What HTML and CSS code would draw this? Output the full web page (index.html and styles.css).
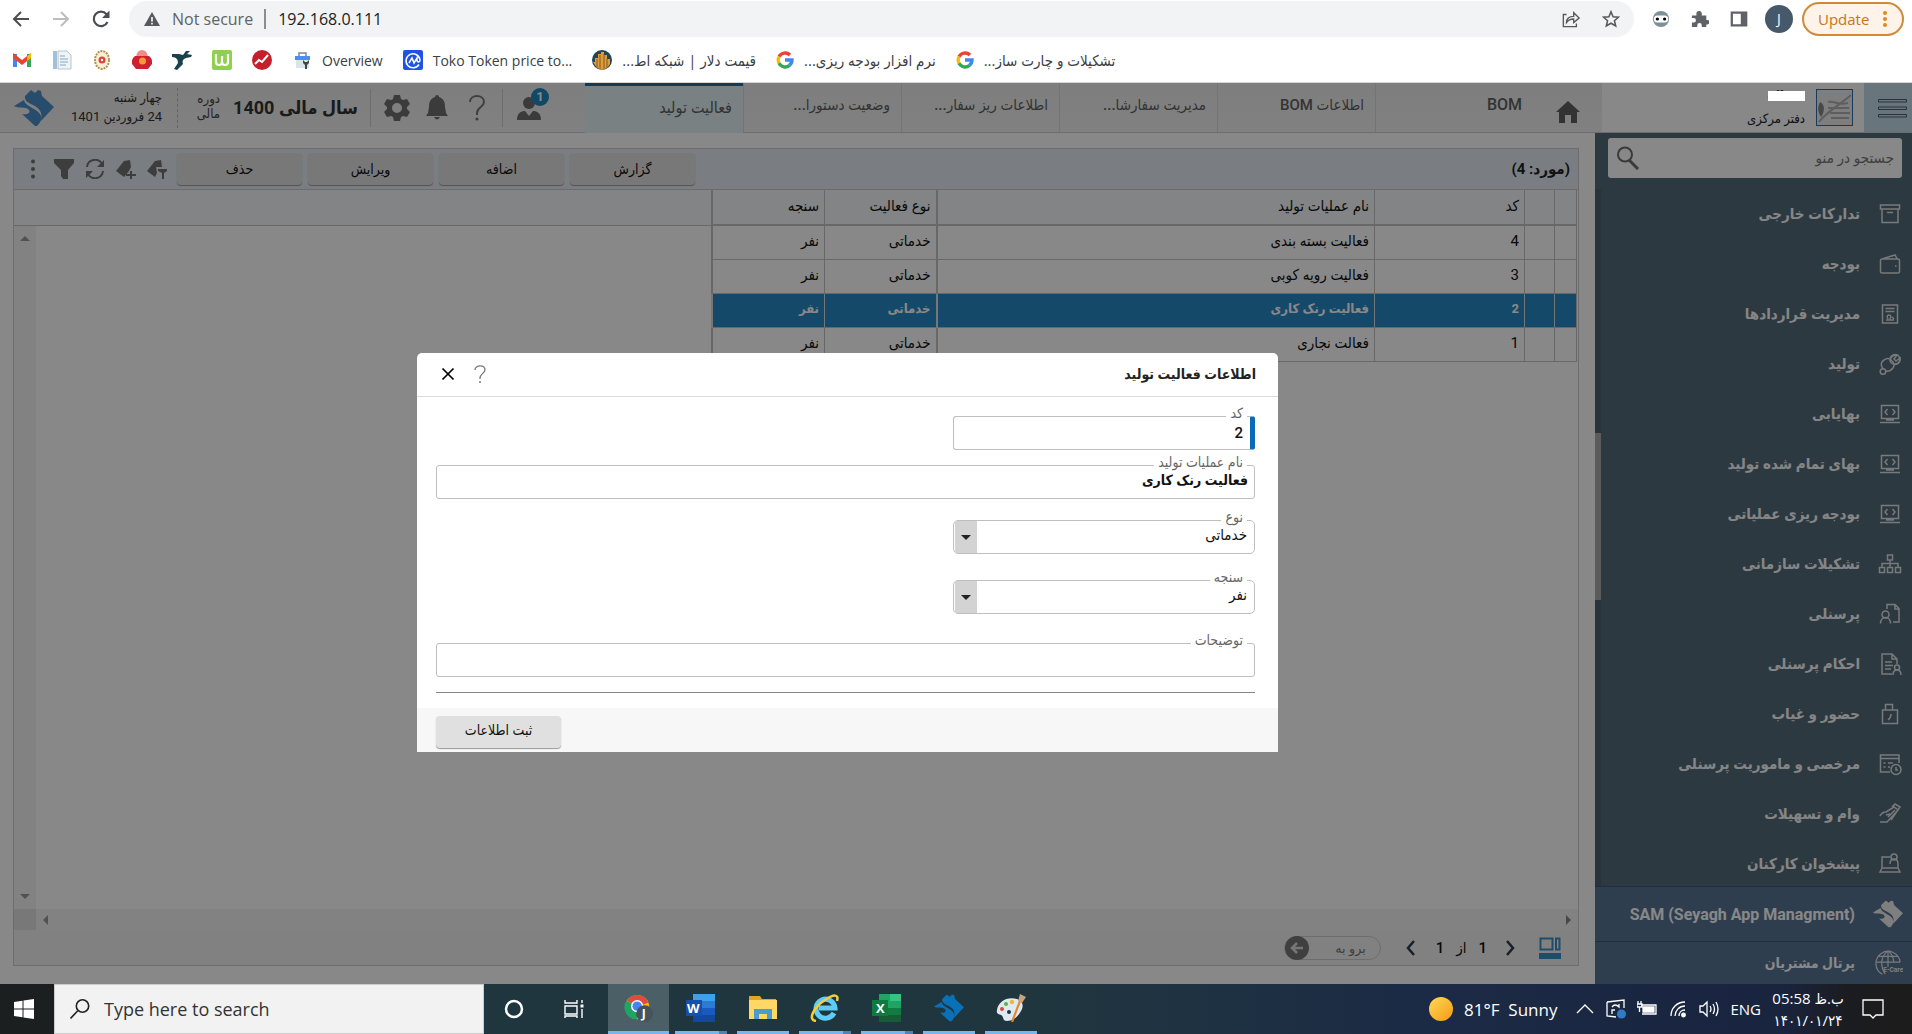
FILE: index.html
```html
<!DOCTYPE html>
<html lang="fa">
<head>
<meta charset="utf-8">
<title>فعالیت تولید</title>
<link rel="stylesheet" href="styles.css">
</head>
<body>
<svg class="defs" aria-hidden="true">
  <symbol id="logo" viewBox="0 0 40 36"><path d="M0 16 10 10c1 7 14 8 17 16 1 4-1 7-4 10h-2L8 24c5 1 9-1 7-4C12 16 4 19 0 16zM11 6l6-6 4 3 3-3 3 1 1 5 12 11-13 14c2-9-2-13-8-16-4-2-9-4-8-9z"/></symbol>
  <symbol id="g" viewBox="0 0 18 18"><g fill="none" stroke-width="3.4"><path stroke="#ea4335" d="M3 5.600A7 7 0 0 1 14 4"/><path stroke="#fbbc05" d="M3.200 12.500a7 7 0 0 1 0-7"/><path stroke="#34a853" d="M13.500 14.400A7 7 0 0 1 3 12.300"/><path stroke="#4285f4" d="M9 9h7a7 7 0 0 1-2.600 5.400"/></g></symbol>
  <symbol id="monitor" viewBox="0 0 24 24"><path d="M3.500 3.500h17v13h-17zM2 20.500h20M8 18h8M9.500 7 7 10l2.500 3M14.500 7l2.500 3-2.500 3"/></symbol>
</svg>

<header class="browser">
  <div class="nav-row">
    <button class="nav-btn" aria-label="Back"><svg viewBox="0 0 20 20"><path d="M18 10H3M10 3l-7 7 7 7" fill="none" stroke="#4b4e52" stroke-width="2"/></svg></button>
    <button class="nav-btn" aria-label="Forward"><svg viewBox="0 0 20 20"><path d="M2 10h15M10 3l7 7-7 7" fill="none" stroke="#bcbdc0" stroke-width="2"/></svg></button>
    <button class="nav-btn" aria-label="Reload"><svg viewBox="0 0 20 20"><path d="M16.500 13A7.200 7.200 0 1 1 15.500 5.200L17 7" fill="none" stroke="#4b4e52" stroke-width="2.200"/><path d="M18.500 1.500V9H11z" fill="#4b4e52"/></svg></button>
    <div class="omnibox">
      <svg class="i16" viewBox="0 0 16 16"><path d="M8 1 16 15H0z" fill="#55585c"/><path d="M8 6v4.500M8 11.800v1.700" stroke="#fff" stroke-width="1.600"/></svg>
      <span class="insecure">Not secure</span>
      <input class="address" aria-label="Address" value="192.168.0.111">
      <svg class="i20" viewBox="0 0 20 20"><path d="M5 5H1.500v13.500H16V15M5 14c0-5 3-7 8-7V3l6 6-6 5v-4c-4 0-6 1-8 4z" fill="none" stroke="#55585c" stroke-width="1.500"/></svg>
      <svg class="i20" viewBox="0 0 20 20"><path d="m10 2 2.300 5.500 6 .500-4.500 4 1.400 5.800L10 14.700l-5.200 3.100L6.200 12 1.700 8l6-.500z" fill="none" stroke="#55585c" stroke-width="1.700"/></svg>
    </div>
    <div class="extensions">
      <svg class="i20" viewBox="0 0 20 20"><circle cx="10" cy="10" r="9" fill="#7b9299"/><rect x="2" y="6" width="16" height="8" rx="4" fill="#fff"/><circle cx="6" cy="10" r="1.800"/><circle cx="14" cy="10" r="1.800"/></svg>
      <svg class="i20" viewBox="0 0 20 20" fill="#5f6368"><path d="M1 6h5V4a3 3 0 0 1 6 0v2h5v5h1a2 2 0 0 1 0 5h-1v3h-5v-2a2 2 0 0 0-5 0v2H1v-5h2a2.500 2.500 0 0 0 0-5H1z"/></svg>
      <svg class="i20" viewBox="0 0 20 20"><path d="M2 3h16v14H2z" fill="none" stroke="#5f6368" stroke-width="2.500"/><path d="M12 3h6v14h-6z" fill="#5f6368"/></svg>
      <span class="profile">J</span>
    </div>
    <button class="update">Update <span class="dots-v"></span></button>
  </div>
  <nav class="bookmarks">
    <a href="#" aria-label="Gmail"><svg viewBox="0 0 20 20"><path d="M1 4h4v13H1z" fill="#4285f4"/><path d="M15 4h4v13h-4z" fill="#34a853"/><path d="m1 3 9 7 9-7v5l-9 7-9-7z" fill="#ea4335"/><path d="M15 6.500 19 3v5l-4 3z" fill="#fbbc05"/></svg></a>
    <a href="#" aria-label="Documents"><svg viewBox="0 0 20 20"><path d="M1 1h4v18H1z" fill="#9fc2da"/><path d="M6 1h9l4 4v14H6z" fill="#eef3f6" stroke="#b8c4cc"/><path d="M8 6h5M8 9h8M8 12h8M8 15h6" stroke="#7fa9c6" stroke-width="1.200"/></svg></a>
    <a href="#" aria-label="Bank"><svg viewBox="0 0 20 20"><ellipse cx="10" cy="10" rx="7" ry="9" fill="#f7eed8" stroke="#b39250" stroke-width="2" stroke-dasharray="2 1"/><circle cx="10" cy="10" r="3.500" fill="#d9433c"/><circle cx="10" cy="10" r="1.200" fill="#fff"/></svg></a>
    <a href="#" aria-label="Market"><svg viewBox="0 0 20 20"><path d="M4 7Q5 0 10 0t6 7z" fill="#ee8d85"/><path d="M3 6h14q4 3 3 8l-4 5H4l-4-5q-1-5 3-8z" fill="#cf2031"/><circle cx="10.500" cy="11" r="3.500" fill="#f59a36"/></svg></a>
    <a href="#" aria-label="Trade"><svg viewBox="0 0 20 20"><path d="M0 4h7l4 1 3-4h4l-3 3 5 1-1 2-5 1c-3 1-4 3-3 6l-6 6-3-1 4-6c0-4-2-6-7-6z" fill="#17424e"/></svg></a>
    <a href="#" aria-label="Wiki"><svg viewBox="0 0 20 20"><rect width="20" height="20" rx="2" fill="#8fd14c"/><path d="M4 4v8q0 3 3 3t3-3V6v6q0 3 3 3t3-3V4" fill="none" stroke="#fff" stroke-width="2.200"/></svg></a>
    <a href="#" aria-label="Bourse"><svg viewBox="0 0 20 20"><circle cx="10" cy="10" r="10" fill="#c4202b"/><path d="m3 14 4-4 3 2 6-7" fill="none" stroke="#fff" stroke-width="2"/></svg></a>
    <a href="#"><svg viewBox="0 0 20 20"><path d="M7 6V3h7v3" fill="none" stroke="#7a8590" stroke-width="1.500"/><path d="M3 6h15v4H3z" fill="#4d8df6"/><path d="M4 10h13v8H4z" fill="#dde3ea"/><path d="M11 10v3l2 2v4h2v-4l2-2v-3l-2 2h-2z" fill="#444"/></svg>Overview</a>
    <a href="#"><svg viewBox="0 0 20 20"><rect width="20" height="20" rx="2" fill="#2052e8"/><path d="M16 14.500a7 7 0 1 1 1-4.500c0 2.500-3 3-3 0V8l-3 5-2-5-3 5" fill="none" stroke="#fff" stroke-width="1.500"/></svg>Toko Token price to...</a>
    <a href="#" dir="rtl" class="fa">قیمت دلار | شبکه اط...<svg viewBox="0 0 20 20"><circle cx="10" cy="10" r="10" fill="#234554"/><path d="M1 12h2V8h3V4h3V2h3v3h3v4h3v5l-3 4-5 2-5-2z" fill="#e39b35"/><path d="M5 9v9M8 5v14M12 4v15M15 9v9" stroke="#7a5a2c"/></svg></a>
    <a href="#" dir="rtl" class="fa">نرم افزار بودجه ریزی...<svg class="goog" viewBox="0 0 18 18"><use href="#g"/></svg></a>
    <a href="#" dir="rtl" class="fa">تشکیلات و چارت ساز...<svg class="goog" viewBox="0 0 18 18"><use href="#g"/></svg></a>
  </nav>
</header>

<main class="app" dir="rtl">
  <header class="topbar">
    <button class="menu-btn" aria-label="منو"><svg viewBox="0 0 30 20"><path d="M.500 1.500h28v2.500H.500zM.500 9h28v2.500H.500zM.500 16.500h28v2.500H.500z" fill="none" stroke="#4f5f6b"/></svg></button>
    <div class="user">
      <svg class="avatar" viewBox="0 0 37 37"><rect x=".5" y=".5" width="36" height="36" fill="#ececec" stroke="#336e9e"/><path d="M4 13c6 3 4 11 1 15-3-5-4-9-1-15z" fill="#888"/><path d="M3 33C9 24 25 15 35 6M12 13c6-2 9 4 20 1M12 19h21M14 24h20M15 29h18" fill="none" stroke="#b0b0b0" stroke-width="2"/></svg>
      <div class="who"><span class="uname">oikoo<i class="cover"></i></span><span>دفتر مرکزی</span></div>
    </div>
    <a class="home" href="#" aria-label="خانه"><svg viewBox="0 0 24 22"><path d="M12 0 0 11h3v11h6v-8h6v8h6V11h3z"/></svg></a>
    <nav class="tabs">
      <a href="#">BOM</a><a href="#">اطلاعات BOM</a><a href="#">مدیریت سفارشا...</a><a href="#">اطلاعات ریز سفار...</a><a href="#">وضعیت دستورا...</a><a href="#" class="active">فعالیت تولید</a>
    </nav>
    <div class="tools" dir="ltr">
      <svg class="brand" viewBox="0 0 40 36"><use href="#logo"/></svg>
      <div class="date" dir="rtl">چهار شنبه<br>24 فروردین 1401</div>
      <div class="period" dir="rtl">دوره<br>مالی</div>
      <div class="year" dir="rtl">سال مالی 1400</div>
      <button class="tool" aria-label="تنظیمات"><svg viewBox="0 0 26 26"><path fill-rule="evenodd" d="M10 0h6l1 4 2 1 4-1 3 5-3 3v2l3 3-3 5-4-1-2 1-1 4h-6l-1-4-2-1-4 1-3-5 3-3v-2L0 9l3-5 4 1 2-1zm3 8a5 5 0 1 0 0 10 5 5 0 0 0 0-10z"/></svg></button>
      <button class="tool" aria-label="اعلان"><svg viewBox="0 0 26 26"><path d="M11 2a2 2 0 0 1 4 0c5 2 6 5 6 10l1 6 2 3H2l2-3 1-6c0-5 1-8 6-10zM10 22h6q-3 5-6 0z"/></svg></button>
      <button class="tool" aria-label="راهنما"><svg viewBox="0 0 26 26"><path d="M6 7c0-8 14-8 14 0 0 5-7 5-7 11v2" fill="none" stroke="#777" stroke-width="2"/><circle cx="13" cy="24" r="1.500"/></svg></button>
      <button class="tool people" aria-label="کاربران"><svg viewBox="0 0 26 26"><circle cx="13" cy="8" r="6"/><path d="M1 25c0-7 4-9 8-9l4 5 4-5c4 0 8 2 8 9z"/></svg><span class="badge">1</span></button>
    </div>
  </header>

  <div class="workspace">
    <aside class="side">
      <div class="finder"><input type="search" placeholder="جستجو در منو" aria-label="جستجو در منو"><svg viewBox="0 0 24 24"><circle cx="9" cy="8.500" r="7" fill="none" stroke="#6d6d6d" stroke-width="2"/><path d="m13 14 9 9" stroke="#6d6d6d" stroke-width="3"/></svg></div>
      <div class="menu-wrap">
      <nav class="menu">
        <a href="#"><svg viewBox="0 0 24 24"><path d="M2.500 3h19v4h-19zM4 7v13.500h16V7M9 10.500h6"/></svg>تدارکات خارجی</a>
        <a href="#"><svg viewBox="0 0 24 24"><path d="M4 7h16q1.500 0 1.500 1.500v11q0 1.500-1.500 1.500H4q-1.500 0-1.500-1.500v-11Q2.500 7 4 7l13-4 2 3.500M17 14h1.500"/></svg>بودجه</a>
        <a href="#"><svg viewBox="0 0 24 24"><path d="M4.500 3h15v18h-15zM7.500 6.500h9M7.500 9.500h9M8 18h8M10 17q-2-4 1-4t1 4M14 15l2 2"/></svg>مدیریت قراردادها</a>
        <a href="#"><svg viewBox="0 0 24 24"><path d="M12 9q1-6 7-6l-3 4 2 2 4-3q0 6-5 6M5 17q-4-6 1-9 4-3 7 0 5 4 2 8-3 4-8 3"/><circle cx="17" cy="7.500" r="5"/><circle cx="5" cy="19.500" r="2.800"/></svg>تولید</a>
        <a href="#"><svg><use href="#monitor"/></svg>بهایابی</a>
        <a href="#"><svg><use href="#monitor"/></svg>بهای تمام شده تولید</a>
        <a href="#"><svg><use href="#monitor"/></svg>بودجه ریزی عملیاتی</a>
        <a href="#"><svg viewBox="0 0 24 24"><path d="M9.500 3h5v5h-5zM1.500 15.500h5v5h-5zM9.500 15.500h5v5h-5zM17.500 15.500h5v5h-5zM12 8v7M4 15v-3.500h16V15"/></svg>تشکیلات سازمانی</a>
        <a href="#"><svg viewBox="0 0 24 24"><path d="M9 7V2.500h8l4 4V20h-6M17 3v4h4M2.500 21.500c0-8 10-8 10 0"/><circle cx="7.500" cy="12.500" r="3.500"/></svg>پرسنلی</a>
        <a href="#"><svg viewBox="0 0 24 24"><path d="M14 22H4V2h10l5 5v5M14 2v5h5M7 10h7M7 13.500h8M7 17h6M15 23q0-5 4-5t4 5"/><circle cx="19" cy="15.500" r="2.500"/></svg>احکام پرسنلی</a>
        <a href="#"><svg viewBox="0 0 24 24"><path d="M4.500 8h15v13.500h-15zM7.500 8V2.500h7V8M13 12q0 4-3 6"/></svg>حضور و غیاب</a>
        <a href="#"><svg viewBox="0 0 24 24"><path d="M12 20H2.500V3H21v8M2.500 6.500H21M5.500 11h2M10 11h5M5.500 15h2M10 15h2M18 15v3h2"/><circle cx="18" cy="17.500" r="5"/></svg>مرخصی و ماموریت پرسنلی</a>
        <a href="#"><svg viewBox="0 0 24 24"><path d="M2 20h7l11-12-4-3-8 5q-4 0-6 4M10 15l7-7M14 5l3-3 5 3-9 13M8 13l4-1"/></svg>وام و تسهیلات</a>
        <a href="#"><svg viewBox="0 0 24 24"><path d="M4 16V5h8M20 12v4M2 20l2-4h16l2 4zM12 12q0-5 4-5t4 5"/><circle cx="16" cy="5" r="3"/></svg>پیشخوان کارکنان</a>
      </nav>
      <i class="thumb"></i>
      </div>
      <a class="product sam" href="#"><svg class="solid" viewBox="0 0 40 36"><use href="#logo"/></svg><bdi>SAM (Seyagh App Managment)</bdi></a>
      <a class="product" href="#"><svg viewBox="0 0 30 30"><path d="M9 27A13 13 0 1 1 28 14M15 2v17M2 14h26M4 8h22M15 2c-8 6-9 16-3 25M15 2c4 3 6 7 6 12" fill="none"/><text x="10" y="25">E-Care</text></svg>پرتال مشتریان</a>
    </aside>

    <section class="panel">
      <div class="actions">
        <strong>(مورد: 4)</strong>
        <button class="btn">گزارش</button><button class="btn">اضافه</button><button class="btn">ویرایش</button><button class="btn">حذف</button>
        <div class="mini" dir="ltr">
          <svg viewBox="0 0 20 20"><circle cx="10" cy="2.500" r="2"/><circle cx="10" cy="10" r="2"/><circle cx="10" cy="17.500" r="2"/></svg>
          <svg viewBox="0 0 20 20"><path d="M0 0h20v4l-6 7v9H9l-2-3v-6L0 4z"/></svg>
          <svg viewBox="0 0 20 20"><path d="M2 8a8 8 0 0 1 15-3M18 12a8 8 0 0 1-15 3" fill="none" stroke="#737373" stroke-width="2"/><path d="M19 1v7h-7zM1 19v-7h7z"/></svg>
          <svg viewBox="0 0 20 20"><path d="M0 12 8 2l6-1 1 7-2 4-5 6zM14 12h2v3h4v2h-4v3h-2v-3h-4v-2h4z"/></svg>
          <svg viewBox="0 0 20 20"><path d="M0 12 8 2l6-1 1 7H9l1 6-2 4zM11 10h9v2l-3 2v6h-2v-6l-4-2z"/></svg>
        </div>
      </div>
      <div class="grid-area">
        <table>
          <colgroup><col class="c1"><col class="c2"><col class="c3"><col class="c4"><col class="c5"><col class="c6"></colgroup>
          <thead><tr><th></th><th></th><th>کد</th><th>نام عملیات تولید</th><th>نوع فعالیت</th><th>سنجه</th></tr></thead>
          <tbody>
            <tr><td></td><td></td><td>4</td><td>فعالیت بسته بندی</td><td>خدماتی</td><td>نفر</td></tr>
            <tr><td></td><td></td><td>3</td><td>فعالیت رویه کوبی</td><td>خدماتی</td><td>نفر</td></tr>
            <tr class="sel"><td></td><td></td><td>2</td><td>فعالیت رنک کاری</td><td>خدماتی</td><td>نفر</td></tr>
            <tr><td></td><td></td><td>1</td><td>فعالت نجاری</td><td>خدماتی</td><td>نفر</td></tr>
          </tbody>
        </table>
        <div class="filler"><div class="head-fill"></div><div class="vscroll"><i class="up"></i><i class="down"></i></div></div>
      </div>
      <div class="hscroll"><i class="right"></i><i class="left"></i><span class="corner"></span></div>
      <footer class="pager">
        <svg viewBox="0 0 22 22"><path d="M1.500 1.500h12v11h-12zM17 1.500h3.500v11H17z" fill="none" stroke="#3a91c6" stroke-width="2"/><path d="M0 16h22v6H0z" fill="#3a91c6"/></svg>
        <button class="prev" aria-label="قبلی"><svg viewBox="0 0 10 16"><path d="m2 1 6 7-6 7" fill="none" stroke="#2c3b52" stroke-width="2.500"/></svg></button>
        <span>1</span><span>از</span><span>1</span>
        <button class="next" aria-label="بعدی"><svg viewBox="0 0 10 16"><path d="M8 1 2 8l6 7" fill="none" stroke="#2c3b52" stroke-width="2.500"/></svg></button>
        <div class="goto"><input placeholder="برو به" aria-label="برو به"><button aria-label="برو"><svg viewBox="0 0 24 24"><circle cx="12" cy="12" r="12" fill="#777"/><path d="M18 12H7M12 7l-5 5 5 5" fill="none" stroke="#ddd" stroke-width="2.500"/></svg></button></div>
      </footer>
    </section>
  </div>

  <div class="backdrop">
    <form class="dialog" role="dialog" aria-labelledby="dlg-title">
      <div class="dlg-head"><h2 id="dlg-title">اطلاعات فعالیت تولید</h2>
        <button type="button" aria-label="راهنما"><svg viewBox="0 0 14 18"><path d="M2 5c0-5.500 10-5.500 10 0 0 3-5 4-5 8v1" fill="none" stroke="#777" stroke-width="1.300"/><circle cx="7" cy="17" r="1"/></svg></button>
        <button type="button" aria-label="بستن"><svg viewBox="0 0 14 18"><path d="m1.500 3.500 11 11M12.500 3.500l-11 11" stroke="#000" stroke-width="1.700"/></svg></button>
      </div>
      <div class="dlg-body">
        <div class="field short key"><label for="f1">کد</label><input id="f1" value="2"></div>
        <div class="field name"><label for="f2">نام عملیات تولید</label><input id="f2" value="فعالیت رنک کاری"></div>
        <div class="field short pick"><label for="f3">نوع</label><select id="f3"><option>خدماتی</option></select><i class="arrow"></i></div>
        <div class="field short pick"><label for="f4">سنجه</label><select id="f4"><option>نفر</option></select><i class="arrow"></i></div>
        <div class="field note"><label for="f5">توضیحات</label><input id="f5"></div>
      </div>
      <div class="dlg-foot"><button class="btn" type="button">ثبت اطلاعات</button></div>
    </form>
  </div>
</main>

<footer class="taskbar">
  <button class="start" aria-label="Start"><svg viewBox="0 0 20 20" fill="#fff"><path d="m0 3 8.500-1.200v7.700H0zM9.500 1.600 20 0v9.500H9.500zM0 10.500h8.500v7.700L0 17zM9.500 10.500H20V20L9.500 18.400z"/></svg></button>
  <label class="tb-search"><svg viewBox="0 0 20 20"><circle cx="12.500" cy="7" r="6.200" fill="none" stroke="#222" stroke-width="1.600"/><path d="M8 11.500.500 19.500" stroke="#222" stroke-width="1.600"/></svg><input placeholder="Type here to search"></label>
  <button class="tile plain" aria-label="Cortana"><svg viewBox="0 0 20 20"><circle cx="10" cy="10" r="8" fill="none" stroke="#fff" stroke-width="2.500"/></svg></button>
  <button class="tile plain" aria-label="Task view"><svg viewBox="0 0 20 20"><path d="M1 1v3h12V1M1 7h12v8H1zM1 19v-2h12v2M18 1v3M18 10v9" fill="none" stroke="#fff" stroke-width="1.400"/><path d="M16.500 5.500h3v3h-3z" fill="#fff"/></svg></button>
  <button class="tile on" aria-label="Chrome"><svg viewBox="0 0 32 30"><circle cx="14" cy="14" r="13" fill="#fbbc05"/><path d="M14 14 3 7a13 13 0 0 1 23 2z" fill="#e04a3f"/><path d="M14 14v13A13 13 0 0 1 2.500 7z" fill="#1fa463"/><circle cx="14" cy="13" r="6.500" fill="#fff"/><circle cx="14" cy="13" r="5" fill="#4285f4"/><circle cx="22" cy="21" r="9" fill="#46535b"/><text x="19" y="26">J</text></svg></button>
  <button class="tile multi" aria-label="Word"><svg viewBox="0 0 30 28"><path d="M7 0h22v7H7z" fill="#3fa0ea"/><path d="M7 7h22v7H7z" fill="#2b7bd4"/><path d="M7 14h22v7H7z" fill="#185abd"/><path d="M7 21h22v7H7z" fill="#1348a0"/><path d="M0 6h16v16H0z" fill="#174fb0"/><text x="1" y="19">W</text></svg></button>
  <button class="tile" aria-label="Files"><svg viewBox="0 0 30 28"><path d="M1 2h11l2 3h14v20H1z" fill="#e2a51f"/><path d="M1 6h28v19H1z" fill="#ffd766"/><path d="M6 25V15h18v10h-5v-5h-8v5z" fill="#4b9ccd"/></svg></button>
  <button class="tile multi" aria-label="Internet Explorer"><svg viewBox="0 0 30 28"><path d="M24 19a9.500 9.500 0 1 1 1-5H9" fill="none" stroke="#5dcdf5" stroke-width="5"/><path d="M6 27C-3 26 4 13 15 6c9-6 14-6 12 1" fill="none" stroke="#f3cf3c" stroke-width="2.500"/></svg></button>
  <button class="tile multi" aria-label="Excel"><svg viewBox="0 0 30 28"><path d="M7 0h22v28H7z" fill="#21a366"/><path d="M18 0h11v7H18z" fill="#33c481"/><path d="M7 14h22v7H7z" fill="#107c41"/><path d="M7 21h22v7H7z" fill="#185c37"/><path d="M0 6h16v16H0z" fill="#0f7a40"/><text x="4" y="19">X</text></svg></button>
  <button class="tile" aria-label="Seyagh"><svg viewBox="0 0 40 36" fill="#0a70b8"><use href="#logo"/></svg></button>
  <button class="tile" aria-label="Paint"><svg viewBox="0 0 30 28"><path d="M1 16C2 7 12 2 21 5c6 2 7 7 4 12s-7 10-14 10c-5 0-3-5-6-6-2-1-5-1-4-5z" fill="#dfe9f2"/><circle cx="6" cy="15" r="2" fill="#e2453c"/><circle cx="10" cy="10" r="2" fill="#57b547"/><circle cx="16" cy="8" r="2.200" fill="#f2b632"/><circle cx="13" cy="18" r="2" fill="#1f3440"/><path d="M16 28 24 7" stroke="#e08a2d" stroke-width="2.200"/><path d="m22 7 2-7 6 3-4 6z" fill="#c9a27a"/></svg></button>
  <div class="tray">
    <i class="sun"></i><span class="weather">81°F&nbsp; Sunny</span>
    <svg viewBox="0 0 20 20"><path d="m2 14 8-8 8 8"/></svg>
    <svg viewBox="0 0 20 20"><path d="M1 3 18 1v8M1 3v14l9 1M6 8q3-4 7 0V5M6 15v-4h3"/><circle cx="15.500" cy="15" r="4.500" fill="#2f7bc8" stroke="none"/></svg>
    <svg viewBox="0 0 20 20"><path d="M4 6h15v9H5M1 2v3M4 2v3M0 5h5v3H0zM2.500 8v5"/><path d="M6 8h11v5H6z" fill="#fff"/></svg>
    <svg viewBox="0 0 20 20"><path d="M3 17C3 9 9 3 17 3M7 17c0-5 4-10 10-10M11 17c0-3 2-6 6-6"/><circle cx="15.500" cy="16" r="1.800" fill="#fff"/></svg>
    <svg viewBox="0 0 20 20"><path d="M1 7h3l4-4v14l-4-4H1zM11 7q2 3 0 6M14 5q3 5 0 10M17 3q4 7 0 14"/></svg>
    <span class="lang">ENG</span>
    <div class="clock"><span dir="rtl">ب.ظ 05:58</span><span>۱۴۰۱/۰۱/۲۴</span></div>
    <svg class="notif" viewBox="0 0 22 22"><path d="M1 2h20v15h-7l-3 3-3-3H1z"/></svg>
  </div>
</footer>
</body>
</html>
```
FILE: styles.css
```css
* { box-sizing: border-box; }
body {
  margin: 0;
  min-height: 100vh;
  display: flex;
  flex-direction: column;
  background: #fff;
  font-family: Roboto, "DejaVu Sans Condensed", "DejaVu Sans", sans-serif;
  color: #222;
}
button, input, select { font: inherit; color: inherit; }
button { border: 0; padding: 0; background: none; }
a { color: inherit; text-decoration: none; }
svg { display: block; flex: none; }
.defs { position: absolute; width: 0; height: 0; }

/* browser chrome */
.browser { font-family: "Open Sans", "DejaVu Sans Condensed", "DejaVu Sans", sans-serif; border-bottom: 1px solid #d5d5d5; height: 83px; }
.nav-row { display: flex; align-items: center; height: 38px; padding: 0 8px 0 11px; }
.nav-btn { width: 20px; height: 20px; margin-right: 20px; }
.nav-btn:nth-of-type(3) { margin-right: 18px; }
.nav-btn svg { width: 20px; height: 20px; }
.omnibox { flex: 1; display: flex; align-items: center; height: 36px; border-radius: 18px; background: #f1f3f4; padding: 0 14px 0 15px; }
.i16 { width: 16px; height: 16px; }
.i20 { width: 18px; height: 20px; margin-left: 22px; }
.insecure { font-size: 16px; color: #606367; margin-left: 12px; padding-right: 11px; border-right: 2px solid #8b8e91; line-height: 20px; }
.address { flex: 1; border: 0; background: none; font-size: 16px; padding: 0 0 0 12px; outline: 0; min-width: 0; }
.extensions { display: flex; align-items: center; padding-right: 9px; }
.extensions .i20 { margin-left: 21px; }
.extensions .i20:first-child { margin-left: 18px; }
.profile { width: 28px; height: 28px; margin-left: 17px; border-radius: 50%; background: #46596a; color: #fff; font-size: 14px; line-height: 28px; text-align: center; }
.update { display: flex; align-items: center; justify-content: space-between; width: 102px; height: 34px; padding: 0 15px 0 14px; border: 2px solid #d08a3a; border-radius: 17px; background: #fdf3e8; color: #c8751a; font-size: 15px; }
.dots-v { width: 4px; height: 4px; border-radius: 50%; background: #e08a1e; box-shadow: 0 -6px #e08a1e, 0 6px #e08a1e; }
.bookmarks { display: flex; align-items: center; gap: 20px; height: 44px; padding-left: 12px; font-size: 14px; color: #3c4043; white-space: nowrap; }
.bookmarks a { display: flex; align-items: center; gap: 10px; }
.bookmarks .fa { font-size: 15px; }
.bookmarks svg { width: 20px; height: 20px; }
.bookmarks .goog { width: 18px; height: 18px; }

/* application frame */
.app { position: relative; flex: 1; display: flex; flex-direction: column; background: #fff; }
.topbar { display: flex; height: 50px; background: linear-gradient(#ececec, #f2f2f2); border-bottom: 1px solid #ccc; color: #606060; }
.menu-btn { width: 48px; padding-right: 4px; background: #c6dbe8; display: grid; place-items: center start; }
.menu-btn svg { width: 30px; height: 20px; }
.user { width: 262px; display: flex; gap: 11px; padding: 6px 11px 0; background: #fff; color: #222; font-size: 13px; line-height: 24px; }
.avatar { width: 37px; height: 37px; }
.who { display: flex; flex-direction: column; align-items: flex-start; }
.uname { position: relative; font-weight: 700; font-size: 15px; line-height: 14px; height: 18px; }
.cover { position: absolute; inset: 2px 0 auto 0; height: 10px; z-index: 20; background: #fff; }
.home { width: 69px; display: grid; place-items: center; padding-top: 8px; }
.home svg { width: 24px; height: 22px; fill: #606060; }
.tabs { display: flex; font-weight: 500; }
.tabs a { width: 158px; padding: 0 11px; line-height: 44px; border-left: 1px solid #dadada; white-space: nowrap; overflow: hidden; font-size: 15px; }
.tabs a:first-child { font-size: 16px; }
.tabs .active { height: 50px; background: #e3f2f6; border-top: 3px solid #2a6d94; border-left: 0; color: #606060; font-size: 16px; }
.tools { flex: 1; display: flex; align-items: center; padding-left: 14px; white-space: nowrap; }
.tools svg { fill: #6f6f6f; }
.tools .brand { width: 40px; height: 36px; fill: #4c8fcb; }
.date { width: 124px; padding-right: 15px; font-size: 13px; line-height: 19px; color: #333; border-right: 1px dashed #bbb; height: 40px; }
.period { width: 42px; font-size: 13px; line-height: 15px; color: #444; height: 34px; }
.year { width: 151px; padding-right: 12px; font-size: 18px; font-weight: 700; color: #333; line-height: 38px; border-right: 1px solid #ccc; }
.tool { width: 40px; display: grid; place-items: center; }
.tool svg { width: 26px; height: 26px; }
.tool:nth-of-type(1) { margin-left: 6px; }
.people { position: relative; width: 52px; height: 38px; margin-left: 5px; border-left: 1px solid #ccc; }
.badge { position: absolute; top: -1px; right: 5px; width: 18px; height: 18px; border-radius: 50%; background: #1f88bf; color: #fff; font-size: 13px; font-weight: 700; line-height: 18px; }
.workspace { flex: 1; display: flex; }

/* side menu */
.side { width: 317px; display: flex; flex-direction: column; background: #556b7b; color: #fff; }
.finder { display: flex; align-items: center; height: 40px; margin: 5px 10px 11px 13px; padding: 0 6px 0 8px; border-radius: 3px; background: #fff; }
.finder input { flex: 1; min-width: 0; border: 0; background: none; font-size: 15px; outline: 0; }
.finder svg { width: 24px; height: 24px; }
input::placeholder { color: #777; opacity: 1; }
.menu-wrap { position: relative; flex: 1 1 0; min-height: 0; overflow: hidden; background: linear-gradient(90deg, #4c606f 6px, transparent 6px); }
.menu { height: 0; }
.thumb { position: absolute; left: 0; top: 35%; width: 6px; height: 24%; background: #ababab; }
.menu a { display: flex; align-items: center; height: 50px; gap: 18px; padding-right: 10px; font-size: 15px; font-weight: 700; line-height: 24px; color: #fafafa; }
.menu svg { width: 24px; height: 24px; fill: none; stroke: #dfe3e6; stroke-width: 1.5; }
.product { display: flex; align-items: center; gap: 18px; height: 43px; padding-right: 9px; background: #587494; font-size: 14px; font-weight: 700; border-top: 1px solid #40566e; }
.sam { height: 55px; font-size: 16px; }
.product svg { width: 30px; height: 28px; stroke: #e2e6ea; stroke-width: 1.3; }
.product .solid { fill: #eee; stroke: none; }
.product text { font-size: 7px; fill: #eee; stroke: none; direction: ltr; }

/* grid panel */
.panel { flex: 1; min-width: 0; display: flex; flex-direction: column; margin: 15px 16px 18px 13px; border: 1px solid #ccc; font-size: 14px; }
.btn { width: 125px; height: 32px; border-radius: 4px; background: #e1e1e1; box-shadow: 0 1px 1px #999; font-size: 14px; font-weight: 500; color: #111; }
.actions { display: flex; align-items: center; gap: 6px; height: 41px; padding: 0 8px 0 9px; background: #e4edf4; border-bottom: 1px solid #c8c8c8; }
.actions strong { flex: 1; font-weight: 700; font-size: 15px; }
.mini { display: flex; gap: 11px; padding-right: 4px; }
.mini svg { width: 20px; height: 20px; fill: #737373; }
.grid-area { flex: 1; display: flex; padding-right: 1px; align-items: stretch; }
table { align-self: flex-start; table-layout: fixed; width: 865px; border-collapse: collapse; font-size: 15px; }
.c1 { width: 22px; } .c2 { width: 30px; } .c3 { width: 150px; } .c4 { width: 438px; } .c5 { width: 112px; } .c6 { width: 113px; }
th, td { height: 34px; padding: 0 5px 2px; border: 1px solid #c3c3c3; text-align: right; line-height: 20px; font-weight: 400; color: #111; }
th { height: 35px; background: #f3f7fa; border-bottom-width: 2px; border-top: 0; font-weight: 500; }
td:nth-child(4), th:nth-child(4) { border-left-width: 2px; }
th:last-child, td:last-child { border-left-width: 2px; }
.sel td { background: #2989c7; color: #fff; font-size: 13px; font-weight: 700; border-left-color: #ddd; }
.filler { flex: 1; display: flex; flex-direction: column; }
.head-fill { height: 36px; background: #f3f7fa; border-bottom: 1px solid #c3c3c3; }
.vscroll { flex: 1; align-self: flex-end; width: 22px; background: #f4f4f4; display: flex; flex-direction: column; justify-content: space-between; align-items: center; padding: 10px 0; }
.up, .down, .left, .right { border: 5px solid transparent; width: 0; height: 0; }
.up { border-top: 0; border-bottom-color: #999; }
.down { border-bottom: 0; border-top-color: #999; }
.left { border-left: 0; border-right-color: #999; }
.right { border-right: 0; border-left-color: #888; }
.hscroll { display: flex; align-items: center; height: 21px; background: #f4f4f4; padding-right: 7px; }
.hscroll .left { margin: 0 auto 0 7px; }
.corner { width: 22px; height: 21px; background: #e2e2e2; }
.pager { display: flex; align-items: center; height: 35px; padding-right: 17px; background: #f2f2f2; font-size: 15px; font-weight: 500; color: #111; }
.pager > svg { width: 22px; height: 22px; margin-left: 24px; }
.pager > button svg { width: 10px; height: 16px; }
.prev { margin-left: 6px; }
.pager > span { margin-right: 12px; }
.next { margin-right: 20px; }
.goto { display: flex; width: 97px; height: 24px; margin-right: 25px; border: 1px solid #ccc; border-radius: 12px; }
.goto input { flex: 1; min-width: 0; border: 0; padding: 0 14px; background: none; font-size: 14px; }
.goto svg { width: 24px; height: 24px; margin-top: -1px; }

/* dialog */
.backdrop { position: absolute; inset: 0; padding: 270px 0 0 417px; direction: ltr; background: rgba(0, 0, 0, .467); z-index: 10; }
.dialog { direction: rtl; width: 861px; max-width: 100%; border-radius: 5px 5px 0 0; background: #fff; }
.dlg-head { display: flex; align-items: center; gap: 18px; height: 44px; padding: 0 22px 2px 24px; border-bottom: 1px solid #d9d9d9; }
.dlg-head h2 { flex: 1; margin: 0; font-size: 14px; font-weight: 700; }
.dlg-head svg { width: 14px; height: 18px; fill: #777; }
.dlg-body { display: flex; flex-direction: column; padding: 19px 0 15px; margin: 0 23px 0 19px; border-bottom: 1px solid #888; }
.field { position: relative; height: 34px; }
.field input, .field select { width: 100%; height: 34px; padding: 0 7px; border: 1px solid #bfbfbf; border-radius: 3px; background: #fff; font-size: 15px; font-weight: 500; color: #111; outline: 0; }
.field select { appearance: none; border-radius: 5px; padding-bottom: 4px; }
.field label { position: absolute; right: 8px; top: -13px; padding: 0 4px; background: #fff; font-size: 14px; line-height: 20px; color: #666; }
.short { width: 302px; }
.key input { border-right: 5px solid #0a6cb8; }
.name { margin-top: 15px; }
.name input { font-size: 14px; font-weight: 700; padding: 0 6px 4px; }
.pick { margin-top: 21px; }
.pick + .pick { margin-top: 26px; }
.note { margin-top: 29px; }
.arrow { position: absolute; left: 2px; top: 1px; width: 22px; height: 32px; background: #d3d3d3; display: grid; place-items: center; pointer-events: none; }
.arrow::before { content: ""; border: 5px solid transparent; border-top-color: #222; border-bottom: 0; }
.dlg-foot { display: flex; justify-content: flex-end; margin-top: 15px; padding: 8px 0 4px 19px; background: #f7f7f7; }
.dlg-foot .btn { background: #e0e0e0; padding-bottom: 4px; }

/* taskbar */
.taskbar { display: flex; height: 50px; background: linear-gradient(90deg, #1c1f20 0, #1c1f20 54px, #20363e 500px, #20363f 1050px, #1c2b45 1400px, #19243f 1780px, #1b1c20 1850px, #1d1c1c); font-family: "Open Sans", "DejaVu Sans Condensed", "DejaVu Sans", sans-serif; color: #fff; }
.start { width: 54px; display: grid; place-items: center; padding-right: 6px; }
.start svg { width: 20px; height: 20px; }
.tb-search { display: flex; align-items: center; gap: 12px; width: 430px; padding-left: 15px; background: #f2f2f2; border: 1px solid #ccc; }
.tb-search svg { width: 20px; height: 20px; }
.tb-search input { flex: 1; border: 0; background: none; font-size: 18px; outline: 0; }
.tb-search input::placeholder { color: #333; }
.tile { width: 52px; margin: 0 5px; display: grid; place-items: center; border-bottom: 3px solid #78b5ea; }
.tile svg { width: 30px; height: 28px; }
.tile text { font: 700 13px "Open Sans", sans-serif; fill: #fff; }
.plain { width: 60px; margin: 0; border: 0; }
.plain svg { width: 20px; height: 20px; }
.on { width: 61px; margin: 0 1px 0 4px; background: #4b5f67; }
.multi { border-image: linear-gradient(90deg, #78b5ea 80%, #5183ae 80%) 3; }
.tray { flex: 1; display: flex; align-items: center; justify-content: flex-end; gap: 11px; padding-right: 28px; }
.tray svg { width: 20px; height: 20px; fill: none; stroke: #fff; stroke-width: 1.3; }
.sun { width: 24px; height: 24px; border-radius: 50%; background: linear-gradient(135deg, #ffd95a, #f59a12); }
.weather { font-size: 17px; margin-right: 7px; white-space: nowrap; }
.lang { font-size: 15px; }
.clock { display: flex; flex-direction: column; align-items: center; width: 72px; font-size: 15px; line-height: 22px; white-space: nowrap; }
.tray .notif { width: 22px; height: 22px; margin-left: 7px; }
```
